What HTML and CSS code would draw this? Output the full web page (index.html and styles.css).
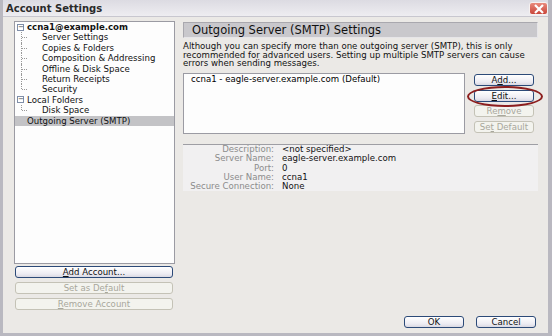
FILE: index.html
```html
<!DOCTYPE html>
<html lang="en">
<head>
  <meta charset="UTF-8" />
  <title>Account Settings</title>
  <link rel="stylesheet" href="styles.css">
</head>
<body>
  <div class="window">
    <div class="titlebar">
      <span class="title">Account Settings</span>
      <span class="close">
        <svg width="12" height="10" viewBox="0 0 12 10"><path d="M2 1 L10 9 M10 1 L2 9" stroke="#fff" stroke-width="2.2"/></svg>
      </span>
    </div>

    <div class="body">
      <div class="sidebar">
        <div class="tree">
          <div class="row root"><span class="toggle">−</span><b>ccna1@example.com</b></div>
          <div class="children">
            <div class="row child">Server Settings</div>
            <div class="row child">Copies &amp; Folders</div>
            <div class="row child">Composition &amp; Addressing</div>
            <div class="row child">Offline &amp; Disk Space</div>
            <div class="row child">Return Receipts</div>
            <div class="row child last">Security</div>
          </div>
          <div class="row root"><span class="toggle">−</span>Local Folders</div>
          <div class="children">
            <div class="row child last">Disk Space</div>
          </div>
          <div class="row root selected">Outgoing Server (SMTP)</div>
        </div>
        <button class="btn wide"><u>A</u>dd Account...</button>
        <button class="btn wide" disabled>Set as De<u>f</u>ault</button>
        <button class="btn wide" disabled><u>R</u>emove Account</button>
      </div>

      <div class="main">
        <div class="heading">Outgoing Server (SMTP) Settings</div>
        <p class="desc">Although you can specify more than one outgoing server (SMTP), this is only recommended for advanced users. Setting up multiple SMTP servers can cause errors when sending messages.</p>

        <div class="servers">
          <div class="list">
            <div class="item">ccna1 - eagle-server.example.com (Default)</div>
          </div>
          <div class="actions">
            <button class="btn">A<u>d</u>d...</button>
            <span class="circled">
              <button class="btn"><u>E</u>dit...</button>
            </span>
            <button class="btn" disabled>Re<u>m</u>ove</button>
            <button class="btn" disabled>Se<u>t</u> Default</button>
          </div>
        </div>

        <div class="details">
          <span class="label">Description:</span><span>&lt;not specified&gt;</span>
          <span class="label">Server Name:</span><span>eagle-server.example.com</span>
          <span class="label">Port:</span><span>0</span>
          <span class="label">User Name:</span><span>ccna1</span>
          <span class="label">Secure Connection:</span><span>None</span>
        </div>

        <div class="footer">
          <button class="btn">OK</button>
          <button class="btn">Cancel</button>
        </div>
      </div>
    </div>
  </div>
</body>
</html>
```

FILE: styles.css
```css
* {
  box-sizing: border-box;
}
body {
  margin: 0;
  background: #fff;
  font-family: 'DejaVu Sans', Verdana, sans-serif;
}
.window {
  width: 552px;
  height: 336px;
  background: #ebe9e6;
  border-left: 3px solid #b9b8c0;
  border-right: 4px solid #b9b8c0;
  border-bottom: 3px solid #b9b8c0;
  display: flex;
  flex-direction: column;
}
.titlebar {
  height: 17px;
  background: linear-gradient(#dcdbe2, #eeedf1);
  border-bottom: 1px solid #c8c7cf;
  display: flex;
  align-items: center;
  justify-content: space-between;
  padding: 0 0 0 3px;
}
.title {
  font-weight: bold;
  font-size: 10px;
  color: #2a2a2a;
}
.close {
  width: 19px;
  height: 13px;
  margin-top: 1px;
  background: linear-gradient(#e98a7c, #c9453a);
  border: 1px solid #f6f1f0;
  border-radius: 3px;
  display: flex;
  align-items: center;
  justify-content: center;
}
.body {
  flex: 1;
  display: flex;
  padding: 4px 10px 5px 11px;
  gap: 8px;
}
.sidebar {
  width: 161px;
  display: flex;
  flex-direction: column;
}
.tree {
  height: 243px;
  background: #fdfdfd;
  border: 1px solid #9b9ba3;
  padding-top: 0;
  font-size: 8.6px;
  color: #111;
  margin-bottom: 1px;
}
.row {
  height: 10.4px;
  line-height: 10.4px;
  white-space: nowrap;
}
.root {
  padding-left: 2px;
  display: flex;
  align-items: center;
}
.toggle {
  width: 7px;
  height: 7px;
  border: 1px solid #7f8ea8;
  font-size: 7px;
  line-height: 4px;
  text-align: center;
  margin-right: 3px;
  color: #333;
  background: #fff;
}
.children {
  margin-left: 6px;
}
.child {
  position: relative;
  padding-left: 20px;
  border-left: 1px dotted #999;
}
.child::before {
  content: '';
  position: absolute;
  left: 0;
  top: 5px;
  width: 5px;
  border-top: 1px dotted #999;
}
.child.last {
  border-left-color: transparent;
}
.child.last::after {
  content: '';
  position: absolute;
  left: -1px;
  top: 0;
  height: 5px;
  border-left: 1px dotted #999;
}
.selected {
  background: #c3c3c6;
  padding-left: 12px;
}
.btn {
  font-family: inherit;
  font-size: 8.6px;
  height: 12px;
  padding: 0;
  color: #111;
  background: linear-gradient(#ffffff, #ecebf2 70%, #d9d8e2);
  border: 1px solid #2c4a78;
  border-radius: 3px;
  line-height: 10px;
}
.btn:disabled {
  color: #a8a79c;
  background: #f3f3ee;
  border-color: #c4c2b6;
}
.wide {
  width: 158px;
  margin-left: 1px;
  margin-top: 4px;
}
.wide:first-of-type {
  margin-top: 1px;
}
.main {
  flex: 1;
  display: flex;
  flex-direction: column;
}
.heading {
  height: 16px;
  margin-top: 1px;
  background: #c9c8cc;
  border: 1px solid #a9a8ae;
  border-right-color: #e6e5e8;
  border-bottom-color: #e6e5e8;
  font-size: 11.5px;
  line-height: 14px;
  padding-left: 8px;
  color: #111;
}
.desc {
  font-size: 8.6px;
  line-height: 8.7px;
  margin: 4px 8px 0 0;
  color: #111;
}
.servers {
  display: flex;
  margin-top: 5px;
}
.list {
  width: 282px;
  height: 61px;
  background: #fdfdfd;
  border: 1px solid #9b9ba3;
  font-size: 8.6px;
}
.item {
  padding-left: 7px;
  line-height: 10px;
}
.actions {
  display: flex;
  flex-direction: column;
  margin-left: 9px;
  padding-top: 1px;
  gap: 3.5px;
}
.actions .btn {
  width: 60px;
}
.circled {
  position: relative;
  display: flex;
}
.circled::after {
  content: '';
  position: absolute;
  left: -7px;
  top: -4px;
  width: 72px;
  height: 17px;
  border: 2px solid #8c1e1e;
  border-radius: 50%;
}
.details {
  margin-top: 10px;
  height: 47px;
  background: #f1f0f1;
  border-top: 1px solid #9e9ea4;
  display: grid;
  grid-template-columns: 91px 1fr;
  column-gap: 8px;
  align-content: start;
  padding-top: 0;
  font-size: 8.6px;
  line-height: 9.3px;
  color: #111;
}
.label {
  text-align: right;
  color: #8c8c8c;
}
.footer {
  margin-top: auto;
  display: flex;
  justify-content: flex-end;
  gap: 12px;
  padding-right: 2px;
}
.footer .btn {
  width: 60px;
}
```
